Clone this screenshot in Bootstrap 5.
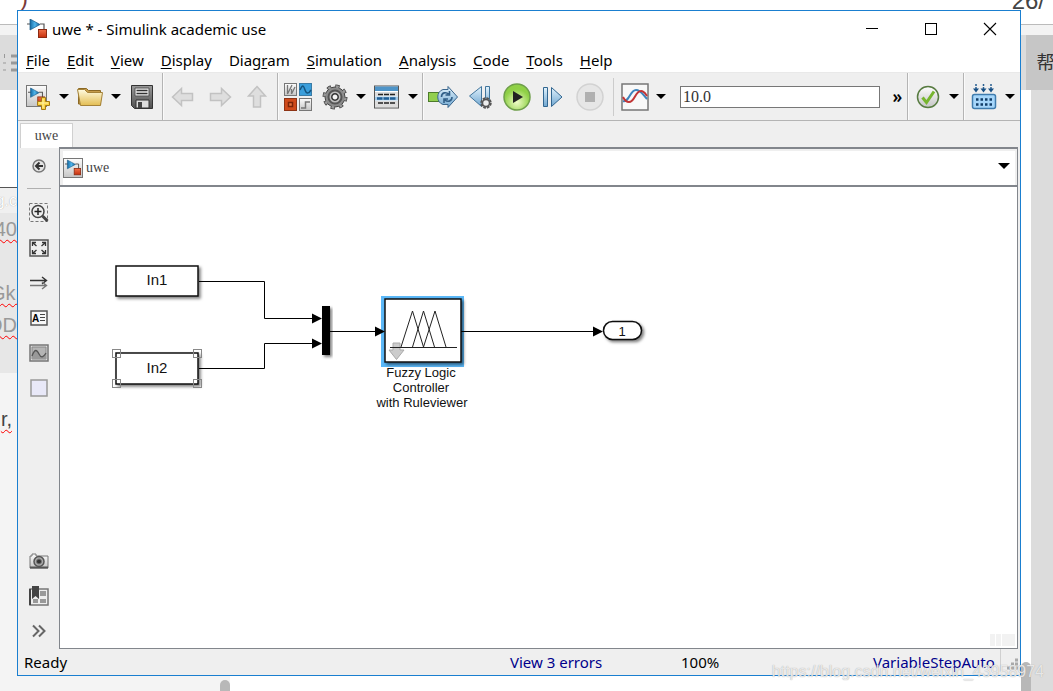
<!DOCTYPE html>
<html lang="en">
<head>
<meta charset="utf-8">
<meta name="viewport" content="width=device-width, initial-scale=1">
<title>uwe * - Simulink academic use</title>
<link href="https://cdn.jsdelivr.net/npm/bootstrap@5.3.0/dist/css/bootstrap.min.css" rel="stylesheet">
<style>
  body { font-family: "Noto Sans", "Open Sans", sans-serif; font-size: 15px; line-height: 20px; color: #000; background: #fff; }
  button { border: 0; background: none; padding: 0; color: #000; }
  svg { display: block; flex: none; }

  /* desktop: strips of the page behind the window */
  .desk { display: grid; height: 100vh; grid-template: 10px minmax(0, 1fr) 15px / 17px minmax(0, 1fr) 32px; overflow: hidden; position: relative; }
  .strip-top { grid-column: 1 / 4; font-size: 24px; line-height: 24px; color: #444; overflow: hidden; padding: 0 8px 0 20px; font-family: "Liberation Sans", sans-serif; }
  .strip-top span { margin-top: -11px; }
  .strip-top .paren { color: #7a3b3b; margin-top: -14px; }
  .strip-left { overflow: hidden; font-family: "Liberation Sans", sans-serif; font-size: 20px; color: #999; white-space: nowrap; }
  .strip-left > div { display: flex; justify-content: flex-end; align-items: center; flex: none; }
  .ruler-gap { height: 25px; background: linear-gradient(#fff 14px, #bbb 14px, #bbb 15px, #f3f3f3 15px); }
  .ribbon { height: 55px; background: #dcdcdc; }
  .blank { height: 98px; background: #fff; border-bottom: 1px solid #555; }
  .mark-row { height: 25px; background: #f0f0f0; color: #fff; font-size: 16px; line-height: 16px; text-shadow: 0 0 1px #999; }
  .code { background: #e7e7e7; height: 160px; flex-direction: column; align-items: flex-end !important; justify-content: flex-start !important; }
  .code span, .tail span { text-decoration: underline wavy red 1px; text-underline-offset: 3px; line-height: 32px; }
  .code .apart { margin-top: 32px; margin-right: -4px; }
  .tail { background: #f4f4f4; flex: 1 0 0 !important; align-items: flex-start !important; padding: 30px 5px 0 0; color: #444; }
  .strip-right .gutter { width: 10px; }
  .strip-right .help-tab { background: #c6c6c6; height: 55px; color: #333; font: 18px/52px "Noto Sans CJK SC", sans-serif; padding-left: 11px; overflow: hidden; white-space: nowrap; }
  .thumb { background: #b8b8b8; width: 10px; border-radius: 5px 5px 0 0; }
  .strip-bottom { grid-column: 1 / 4; }
  .strip-bottom .pale { background: #f4f4f4; width: 230px; padding-top: 4px; }
  .strip-bottom .page-side { background: #dcdcdc; width: 22px; }

  /* application window */
  .app { border: 1px solid #1a7fd0; background: #efefef; min-width: 0; min-height: 0; }
  .titlebar { height: 36px; background: #fff; padding: 0 23px 0 9px; }
  .titlebar h1 { font-size: 15px; line-height: 20px; font-weight: 400; }
  .win-buttons { gap: 45px; }
  .menus { background: #fff; height: 26px; padding: 0 8px; gap: 17px; border-bottom: 1px solid #e9e9e9; }
  .menus a { color: #000; text-decoration: none; line-height: 26px; }
  .menus a::first-letter { text-decoration: underline; text-underline-offset: 2px; }
  .menus a.plain::first-letter { text-decoration: none; }
  .menus u { text-underline-offset: 2px; }

  .tools { height: 48px; border-bottom: 1px solid #b4b4b4; }
  .group { display: flex; align-items: center; padding-left: 6px; border-right: 1px solid #b4b4b4; box-shadow: 1px 0 #fafafa; }
  .group:last-child { border-right: 0; padding-right: 1px; box-shadow: none; }
  .spaced { gap: 9px; padding-right: 6px; }
  .file-group { padding-right: 6px; }
  .nav-group { padding-left: 6px; }
  .tool { width: 28px; display: flex; justify-content: center; flex: none; }
  .spread { margin-left: 9px; }
  .caret { width: 16px; margin: 0 4px; display: flex; justify-content: center; flex: none; }
  .caret::after { content: ""; border: 5px solid transparent; border-top-color: #000; border-bottom: 0; }
  .caret:last-child { margin-right: 1px; }
  .run-group { gap: 8px; padding-left: 4px; min-width: 0; }
  .run-group .caret { margin: 0 3px 0 -4px; }
  .rule { border-left: 1px solid #ccc; height: 38px; margin-right: -1px; }
  .stop-time { flex: 1 1 0; min-width: 60px; height: 22px; border: 1px solid #777; background: #fff; padding: 0 2px; font: 16px/20px "Liberation Serif", serif; color: #333; }
  .more { width: 19px; font-size: 17px; line-height: 18px; font-weight: 600; }

  .tabs { height: 27px; padding: 2px 0 0 2px; }
  .tab-on { background: #fff; border: 1px solid #d0d0d0; border-bottom: 0; width: 53px; font: 14px/24px "Liberation Serif", serif; color: #444; }
  .palette { width: 41px; padding: 0 3px 1px 4px; }
  .palette button { height: 35px; display: flex; align-items: center; justify-content: center; flex: none; }
  .palette hr { margin: 5px 5px 6px; border: 0; border-top: 1px solid #b0b0b0; opacity: 1; flex: none; }
  .editor { border: 1px solid #82868c; border-top: 2px solid #82868c; background: #fff; margin: -1px 2px 0 0; min-width: 0; }
  .crumbs { height: 36px; border: 2px solid #efefef; border-left-width: 3px; border-bottom: 0; box-shadow: 0 2px #82868c; font: 14px/18px "Liberation Serif", serif; color: #444; gap: 3px; flex: none; margin-bottom: 2px; }
  .crumbs .caret { margin-right: 3px; margin-top: -4px; }
  .crumbs .caret::after { border-width: 6px 6px 0; }
  .canvas { position: relative; min-height: 0; }
  .canvas svg text { font-family: "Liberation Sans", sans-serif; fill: #111; text-anchor: middle; }
  .scroll-ghost { position: absolute; right: 2px; bottom: 2px; gap: 1px; }
  .scroll-ghost i { background: #f2f2f2; height: 12px; width: 5px; }
  .scroll-ghost i:last-child { width: 13px; }
  .status { display: grid; grid-template-columns: 486fr 171fr 192fr 147fr; height: 26px; padding-left: 6px; align-items: center; flex: none; line-height: 26px; }
  .status a { color: #00008b; text-decoration: none; }
  .stamp { position: absolute; right: 9px; bottom: 9px; font: 16px/20px "Liberation Sans", sans-serif; color: rgba(255,255,255,.75); text-shadow: 0 0 1px #999; pointer-events: none; }
</style>
</head>
<body>
<svg width="0" height="0" class="position-absolute" aria-hidden="true">
  <defs>
    <linearGradient id="blue" x2="0" y2="1"><stop stop-color="#e2f3fd"/><stop offset="1" stop-color="#6fa6d0"/></linearGradient>
    <linearGradient id="tri" x2="1" y2="0"><stop stop-color="#1669a0"/><stop offset=".5" stop-color="#4fb5ec"/><stop offset="1" stop-color="#175b8e"/></linearGradient>
    <linearGradient id="red" x2="0" y2="1"><stop stop-color="#f0714a"/><stop offset="1" stop-color="#c52f0c"/></linearGradient>
    <linearGradient id="gold" x2="0" y2="1"><stop stop-color="#fffbe0"/><stop offset="1" stop-color="#e3bd52"/></linearGradient>
    <linearGradient id="grey" x2="0" y2="1"><stop stop-color="#fdfdfd"/><stop offset="1" stop-color="#c5c5c5"/></linearGradient>
    <linearGradient id="steel" x2="0" y2="1"><stop stop-color="#999"/><stop offset="1" stop-color="#505050"/></linearGradient>
    <radialGradient id="green" cy=".7"><stop stop-color="#effcc8"/><stop offset="1" stop-color="#8fd046"/></radialGradient>
    <filter id="shade" x="-20%" y="-20%" width="150%" height="160%"><feDropShadow dx="2" dy="2" stdDeviation="1.5" flood-opacity=".5"/></filter>
    <g id="model"><path d="M0 5h6M13 5h4v6" fill="none" stroke="#555" stroke-width="1.2"/><path d="M3 0l10 5.500-10 5.500z" fill="url(#tri)" stroke="#145785" stroke-width=".7"/><rect x="11.500" y="10.500" width="8" height="8" fill="url(#red)" stroke="#8c2a12"/></g>
  </defs>
</svg>

<div class="desk">
  <div class="strip-top d-flex justify-content-between"><span class="paren">)</span><span>26/</span></div>

  <div class="strip-left d-flex flex-column">
    <div class="ruler-gap"></div>
    <div class="ribbon"><svg width="14" height="22" stroke="#999"><path d="M8 4h6M8 11h6M8 18h6" stroke-width="3"/><path d="M1.500 2v4M0 11h3M0 18h3" /></svg></div>
    <div class="blank"></div>
    <div class="mark-row">g.c</div>
    <div class="code"><span>40</span><span class="apart">Gk.</span><span>OD</span></div>
    <div class="tail"><span>r,</span></div>
  </div>

  <main class="app d-flex flex-column">
    <header class="titlebar d-flex align-items-center">
      <svg width="21" height="20"><use href="#model"/></svg>
      <h1 class="m-0 ms-1 flex-grow-1">uwe * - Simulink academic use</h1>
      <div class="win-buttons d-flex align-items-center">
        <button aria-label="Minimize"><svg width="14" height="14"><path d="M1 6.500h12" stroke="#000"/></svg></button>
        <button aria-label="Maximize"><svg width="14" height="14"><rect x="1.500" y="1.500" width="11" height="11" fill="none" stroke="#000"/></svg></button>
        <button aria-label="Close"><svg width="14" height="14"><path d="M1 1l12 12M13 1L1 13" stroke="#000" stroke-width="1.100"/></svg></button>
      </div>
    </header>

    <nav class="menus d-flex" aria-label="Menu">
      <a href="#">File</a><a href="#">Edit</a><a href="#">View</a><a href="#">Display</a><a href="#" class="plain">Diag<u>r</u>am</a><a href="#">Simulation</a><a href="#">Analysis</a><a href="#">Code</a><a href="#">Tools</a><a href="#">Help</a>
    </nav>

    <div class="tools d-flex" role="toolbar" aria-label="Tools">
      <div class="group file-group">
        <button class="tool" aria-label="New model"><svg width="28" height="28"><rect x="2.500" y="2.500" width="20" height="21" fill="url(#grey)" stroke="#777"/><use href="#model" transform="translate(4 5) scale(.85)"/><path d="M17.500 14.500h4v4h4v4h-4v4h-4v-4h-4v-4h4z" fill="#fbd343" stroke="#a77a14"/><path d="M19 16v9M15 20h9" stroke="#fff3a8"/></svg></button>
        <button class="caret" aria-label="New options"></button>
        <button class="tool" aria-label="Open"><svg width="28" height="22"><path d="M2.500 18V2.500h8l2 2h12V19z" fill="#c59c4b" stroke="#8b6824"/><path d="M1.500 3.500h7l3 3h15l-2 13h-20z" fill="url(#gold)" stroke="#a58238"/></svg></button>
        <button class="caret" aria-label="Open options"></button>
        <button class="tool" aria-label="Save"><svg width="26" height="26"><path d="M2.500 1.500h21v23h-18l-3-3z" fill="url(#steel)" stroke="#333"/><path d="M6 4h14v8H6z" fill="#eee" stroke="#555"/><path d="M7.500 6.500h11M7.500 9.500h11" stroke="#333" stroke-width="1.500"/><path d="M7 16h13v8H7z" fill="#ddd" stroke="#333"/><path d="M9 18h4v6H9z" fill="#444"/></svg></button>
      </div>
      <div class="group nav-group spaced">
        <button class="tool" aria-label="Back"><svg width="24" height="22"><path d="M1.500 11l9-8.500v5h11v7h-11v5z" fill="#dedede" stroke="#c2c2c2" stroke-width="1.500"/></svg></button>
        <button class="tool" aria-label="Forward"><svg width="24" height="22"><path d="M22.500 11l-9-8.500v5h-11v7h11v5z" fill="#dedede" stroke="#c2c2c2" stroke-width="1.500"/></svg></button>
        <button class="tool" aria-label="Up to parent"><svg width="22" height="24"><path d="M11 1.500l8.500 9.500h-5v11h-7V11h-5z" fill="#dedede" stroke="#c2c2c2" stroke-width="1.500"/></svg></button>
      </div>
      <div class="group">
        <button class="tool" aria-label="Library browser"><svg width="28" height="28"><rect x=".5" y=".5" width="12" height="12" fill="url(#grey)" stroke="#777"/><path d="M3.500 2v9L8 2M7.500 11V6M7.500 11L11 4" fill="none" stroke="#777" stroke-width="1.300"/><rect x="15.500" y=".5" width="12" height="12" fill="#3a9edb" stroke="#3a7ba5"/><path d="M16 7c3-7 4-3 5 0s3 5 6 0" fill="none" stroke="#145580" stroke-width="1.500"/><rect x=".5" y="15.500" width="12" height="12" fill="#cf4a1b" stroke="#8d3315"/><path d="M4.500 19.500h4v4h-4z" fill="#e4703c" stroke="#7b2409" stroke-width="1.500"/><rect x="15.500" y="15.500" width="12" height="12" fill="url(#grey)" stroke="#777"/><path d="M17 25h4.500v-6H26" fill="none" stroke="#777" stroke-width="1.500"/></svg></button>
        <button class="tool spread" aria-label="Model configuration"><svg width="28" height="28" viewBox="-14 -14 28 28"><circle r="10.500" fill="none" stroke="#444" stroke-width="4" stroke-dasharray="4.100 4.147"/><circle r="10" fill="#8b8b8b" stroke="#444"/><circle r="10.500" fill="none" stroke="#999" stroke-width="2.500" stroke-dasharray="2.700 5.547" stroke-dashoffset="-.7"/><circle r="6.500" fill="#bdbdbd" stroke="#555" stroke-width="2"/><circle r="3.200" fill="#f5f5f5" stroke="#333" stroke-width="1.500"/></svg></button>
        <button class="caret" aria-label="Configuration options"></button>
        <button class="tool" aria-label="Model explorer"><svg width="28" height="26"><rect x="1.500" y="2" width="24" height="22" fill="#fff" stroke="#555"/><path d="M2 2.500h23V7H2z" fill="#4e94c8"/><path d="M2 8h23v4H2zM2 17h23v6H2z" fill="#ddd"/><path d="M2 12.500h23v4H2z" fill="#a7cbe7"/><path d="M5 10.500h17M5 19h17" stroke="#222" stroke-width="1.500" stroke-dasharray="5 1"/><path d="M4 14.500h19" stroke="#1e5e96" stroke-width="2.500" stroke-dasharray="5.500 1"/></svg></button>
        <button class="caret" aria-label="Explorer options"></button>
      </div>
      <div class="group run-group flex-grow-1">
        <button aria-label="Update diagram"><svg width="32" height="24"><rect x="1.500" y="7.500" width="12" height="9" fill="#92cf4e" stroke="#4d7b2b"/><path d="M16 4.500h5v-3l9.500 10.500L21 22.500v-3h-5c-7-2-7-13 0-15z" fill="url(#blue)" stroke="#39658c"/><path d="M14.500 12c0-5 5-5 7-3M22.500 6v4h-4M25 12c0 5-5 5-7 3M17 18v-4h4" fill="none" stroke="#315f88" stroke-width="1.600"/></svg></button>
        <button class="tool" aria-label="Step back"><svg width="28" height="26"><path d="M14.500 2.500v20L2.500 12zM18.500 2.500h4v15h-4z" fill="url(#blue)" stroke="#41759c"/><circle cx="19" cy="19" r="4.500" fill="#ccc" stroke="#555" stroke-width="2.500" stroke-dasharray="2.500 1"/><circle cx="19" cy="19" r="3.500" fill="#eee" stroke="#555" stroke-width="1.500"/></svg></button>
        <button class="tool" aria-label="Run"><svg width="28" height="28"><circle cx="14" cy="14" r="13" fill="url(#green)" stroke="#6f9f4b" stroke-width="1.500"/><path d="M10 8l10 6-10 6z" fill="#222"/></svg></button>
        <button class="tool" aria-label="Step forward"><svg width="24" height="22"><path d="M2.500 1.500h4v19h-4zM10.500 1.500v19L21 11z" fill="url(#blue)" stroke="#316690"/></svg></button>
        <button aria-label="Stop"><svg width="30" height="28"><circle cx="15" cy="14" r="13" fill="#e6e6e6" stroke="#d2d2d2" stroke-width="1.500"/><rect x="10" y="9" width="10" height="10" fill="#b0b0b0"/></svg></button>
        <span class="rule"></span>
        <button class="tool" aria-label="Data inspector"><svg width="28" height="28"><rect x="1" y="1" width="26" height="26" fill="#f8f8f8" stroke="#777" stroke-width="1.500"/><path d="M2 18c6 2 7-11 13-11 5 0 7 5 11 9" fill="none" stroke="#3d84bd" stroke-width="2"/><path d="M2 14c2 4 4 5 6 5 6 0 6-11 12-11 3 0 4 2 6 5" fill="none" stroke="#c23535" stroke-width="2"/></svg></button>
        <button class="caret" aria-label="Inspector options"></button>
        <input class="stop-time" type="text" value="10.0" aria-label="Simulation stop time">
        <button class="more" aria-label="More tools">»</button>
      </div>
      <div class="group">
        <button class="tool" aria-label="Model advisor"><svg width="24" height="24"><circle cx="12" cy="12" r="10.500" fill="url(#grey)" stroke="#577b40" stroke-width="1.500"/><path d="M6.500 12.500l4 5L18 6.500" fill="none" stroke="#76b52e" stroke-width="3"/></svg></button>
        <button class="caret" aria-label="Advisor options"></button>
      </div>
      <div class="group">
        <button class="tool" aria-label="Build model"><svg width="26" height="28"><path d="M5 1v6M12.500 1v6M20 1v6" stroke="#285f91" stroke-width="1.500" stroke-dasharray="2 1 5"/><path d="M2 5.500h6L5 9.500zM9.500 5.500h6l-3 4zM17 5.500h6l-3 4z" fill="#164f84"/><rect x="1.500" y="11.500" width="23" height="14" rx="2" fill="#a6d6fa" stroke="#3f7cae" stroke-width="1.500"/><path d="M5 16.500h17M5 21.500h17" stroke="#113d68" stroke-width="2.500" stroke-dasharray="2.500 2"/></svg></button>
        <button class="caret" aria-label="Build options"></button>
      </div>
    </div>

    <div class="tabs d-flex"><button class="tab-on">uwe</button></div>

    <div class="d-flex flex-grow-1" style="min-height:0">
      <aside class="palette d-flex flex-column flex-shrink-0">
        <button aria-label="Hide browser"><svg width="16" height="16"><circle cx="8" cy="8" r="6" fill="#e5e5e5" stroke="#777" stroke-width="1.500"/><path d="M12 8H6M8.500 4.500L5 8l3.500 3.500" fill="none" stroke="#333" stroke-width="2"/></svg></button>
        <hr>
        <button aria-label="Zoom"><svg width="20" height="20"><rect x=".5" y=".5" width="18" height="18" fill="none" stroke="#777" stroke-dasharray="3 2"/><circle cx="9" cy="8.500" r="6" fill="#eee" stroke="#444" stroke-width="1.500"/><path d="M9 5v7M5.500 8.500h7" stroke="#222" stroke-width="1.500"/><path d="M13.500 13l5 5" stroke="#444" stroke-width="3"/></svg></button>
        <button aria-label="Fit to view"><svg width="20" height="18"><rect x="1" y="1" width="18" height="16" fill="#eee" stroke="#555" stroke-width="1.500"/><path d="M3.500 7V3.500H7M4 4l3.500 3M13 3.500h3.500V7M16 4l-3.500 3M3.500 11v3.500H7M4 14l3.500-3M13 14.500h3.500V11M16 14l-3.500-3" fill="none" stroke="#333" stroke-width="1.300"/></svg></button>
        <button aria-label="Sample time"><svg width="20" height="14"><path d="M1 4.500h16M13 1l4.500 3.500L13 8" fill="none" stroke="#333" stroke-width="1.400"/><path d="M1 9.500h16M13 6l4.500 3.500L13 13" fill="none" stroke="#777" stroke-width="1.400"/></svg></button>
        <button aria-label="Annotation"><svg width="18" height="16"><rect x="1" y="1" width="16" height="14" fill="#f7f7f7" stroke="#555" stroke-width="1.500"/><text x="2" y="12" font-size="10" font-weight="700" font-family="Liberation Sans, sans-serif">A</text><path d="M10 4.500h5M10 7.500h5M10 10.500h5" stroke="#444"/></svg></button>
        <button aria-label="Image"><svg width="20" height="18"><rect x="1" y="1" width="18" height="16" fill="#ddd" stroke="#777" stroke-width="1.500"/><path d="M3 3h14v12H3z" fill="#b5b5b5" stroke="#888"/><path d="M3 12c3-8 5-6 7-2s4 4 7-1v6H3z" fill="#999"/><path d="M3 12c3-8 5-6 7-2s4 4 7-1" fill="none" stroke="#555" stroke-width="1.300"/></svg></button>
        <button aria-label="Area"><svg width="18" height="18"><rect x="1" y="1" width="16" height="16" fill="#e8e8f8" stroke="#999" stroke-width="1.500"/></svg></button>
        <button class="mt-auto" aria-label="Screenshot"><svg width="20" height="16"><path d="M1 3h2V1h4v2h12v12H1z" fill="url(#grey)" stroke="#777"/><path d="M1 14.500h18" stroke="#555" stroke-width="2"/><circle cx="10" cy="8.500" r="5" fill="#aaa" stroke="#555" stroke-width="1.500"/><circle cx="10" cy="8.500" r="2.500" fill="#333" stroke="#777"/></svg></button>
        <button aria-label="Viewmarks"><svg width="20" height="20"><rect x="1" y="3" width="18" height="16" fill="#eee" stroke="#777" stroke-width="1.500"/><path d="M1 3v16" stroke="#444" stroke-width="2"/><path d="M11 5h6v5h-6zM11 13h6v4h-6zM4 13h5v4H4z" fill="#999"/><path d="M3 0h7v13l-3.500-3L3 13z" fill="#444"/></svg></button>
        <button aria-label="Expand palette"><svg width="14" height="14"><path d="M1 1.500l5.500 5.500L1 12.500M7 1.500l5.500 5.500L7 12.500" fill="none" stroke="#666" stroke-width="2"/></svg></button>
      </aside>

      <section class="editor d-flex flex-column flex-grow-1">
        <div class="crumbs d-flex align-items-center">
          <svg width="20" height="20"><rect x=".5" y=".5" width="19" height="19" fill="url(#grey)" stroke="#777"/><use href="#model" transform="translate(2 2) scale(.8)"/></svg>
          <span class="flex-grow-1">uwe</span>
          <button class="caret" aria-label="Model path"></button>
        </div>
        <div class="canvas flex-grow-1">
          <svg width="100%" height="100%" role="img" aria-label="Block diagram">
            <g fill="#fff" stroke="#111" stroke-width="1.500">
              <rect x="56" y="79" width="82" height="30" filter="url(#shade)"/>
              <rect x="56" y="166" width="82" height="31" filter="url(#shade)"/>
            </g>
            <g fill="none" stroke="#888"><rect x="52.500" y="162.500" width="8" height="8"/><rect x="133.500" y="162.500" width="8" height="8"/><rect x="52.500" y="192.500" width="8" height="8"/><rect x="133.500" y="192.500" width="8" height="8"/></g>
            <rect x="262" y="119" width="8" height="49" filter="url(#shade)"/>
            <rect x="321" y="109" width="83" height="71" fill="#5bb8f8"/>
            <rect x="325" y="112" width="76" height="63" fill="#fff" stroke="#111" stroke-width="1.500" filter="url(#shade)"/>
            <path d="M139 94.500h65.500v37H254M139 181.500h65.500v-25H254M270 144.500h46M401 144.500h134" fill="none" stroke="#000"/>
            <path d="M252 126.500l10 5-10 5zM252 151.500l10 5-10 5zM315 139.500l10 5-10 5zM533 139.500l10 5-10 5z"/>
            <path d="M333 156h7v7h4l-7.500 9.500L329 163h4z" fill="#ccc" stroke="#aaa"/>
            <path d="M330 160.500h67M341 160l11.500-36L363.500 160M352.500 160l11-36 11 36M363.500 160l11.500-36 11 36" fill="none" stroke="#222"/>
            <rect x="543.500" y="134.500" width="38" height="18" rx="9" fill="#fff" stroke="#111" stroke-width="1.500" filter="url(#shade)"/>
            <g font-size="15"><text x="97" y="98">In1</text><text x="97" y="186">In2</text></g>
            <g font-size="13"><text x="562" y="149">1</text><text x="361" y="190">Fuzzy Logic</text><text x="361" y="205">Controller</text><text x="362" y="220">with Ruleviewer</text></g>
          </svg>
          <div class="scroll-ghost d-flex"><i></i><i></i><i></i></div>
        </div>
      </section>
    </div>

    <footer class="status">
      <span>Ready</span><a href="#">View 3 errors</a><span>100%</span>
      <span class="d-flex"><a href="#">VariableStepAuto</a><svg class="ms-auto" width="20" height="22"><path d="M.5 0v22" stroke="#d0d0d0"/><path d="M15 11h3M11 15h3M15 15h3M7 19h3M11 19h3M15 19h3" stroke="#aaa" stroke-width="3"/></svg></span>
    </footer>
  </main>

  <div class="strip-right d-flex flex-column">
    <div class="ruler-gap"></div>
    <div class="d-flex"><div class="gutter" style="background:#dcdcdc"></div><div class="help-tab flex-grow-1">帮助</div></div>
    <div class="d-flex flex-grow-1"><div class="gutter d-flex align-items-end"><div class="thumb" style="height:14px"></div></div><div class="flex-grow-1" style="background:#dcdcdc"></div></div>
  </div>

  <div class="strip-bottom d-flex">
    <div class="pale d-flex justify-content-end"><div class="thumb"></div></div>
    <div class="flex-grow-1"></div>
    <div class="thumb rounded-0"></div>
    <div class="page-side"></div>
  </div>

  <div class="stamp">https://blog.csdn.net/weixin_43958974</div>
</div>
<script src="https://cdn.jsdelivr.net/npm/bootstrap@5.3.0/dist/js/bootstrap.bundle.min.js"></script>
</body>
</html>
